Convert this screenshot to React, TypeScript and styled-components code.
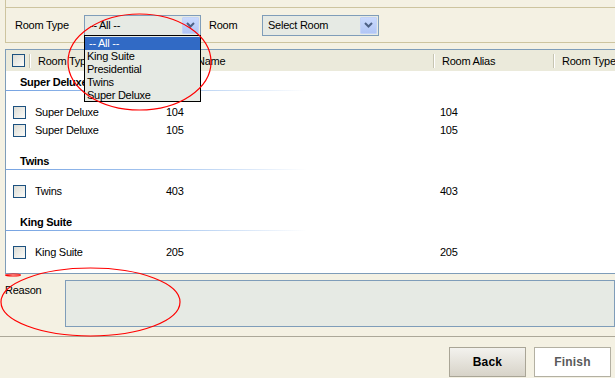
import * as React from 'react'
import styled, { createGlobalStyle } from 'styled-components'

const GlobalStyle = createGlobalStyle`
  html, body {
    margin: 0;
    padding: 0;
    background: #f4f1e3;
  }
  body {
    font-family: 'Liberation Sans', Arial, sans-serif;
    font-size: 11px;
    letter-spacing: -0.25px;
    color: #000;
  }
`

type Room = { type: string; name: string; alias: string }

const groups: { title: string; rooms: Room[] }[] = [
  {
    title: 'Super Deluxe',
    rooms: [
      { type: 'Super Deluxe', name: '104', alias: '104' },
      { type: 'Super Deluxe', name: '105', alias: '105' },
    ],
  },
  { title: 'Twins', rooms: [{ type: 'Twins', name: '403', alias: '403' }] },
  { title: 'King Suite', rooms: [{ type: 'King Suite', name: '205', alias: '205' }] },
]

const roomTypes = ['-- All --', 'King Suite', 'Presidential', 'Twins', 'Super Deluxe']

function Chevron() {
  return (
    <svg width='9' height='6' viewBox='0 0 9 6'>
      <path d='M1 1 L4.5 4.5 L8 1' fill='none' stroke='#4d6185' strokeWidth='2' />
    </svg>
  )
}

export default function App() {
  return (
    <Page>
      <GlobalStyle />
      <TopBox />
      <FilterBar>
        <FieldLabel $width={69}>Room Type</FieldLabel>
        <FakeSelect>
          <span>-- All --</span>
          <ArrowButton>
            <Chevron />
          </ArrowButton>
        </FakeSelect>
        <FieldLabel $width={61} $indent={8}>
          Room
        </FieldLabel>
        <FakeSelect>
          <span>Select Room</span>
          <ArrowButton>
            <Chevron />
          </ArrowButton>
        </FakeSelect>
      </FilterBar>

      <GridFrame>
        <HeaderRow>
          <HeaderCell>
            <Checkbox $offset={6} />
          </HeaderCell>
          <HeaderCell $sep>Room Type</HeaderCell>
          <HeaderCell $sep>Name</HeaderCell>
          <HeaderCell $sep>Room Alias</HeaderCell>
          <HeaderCell $sep>Room Type</HeaderCell>
        </HeaderRow>
        <GridBody>
          {groups.map(g => (
            <Group key={g.title}>
              <GroupTitle>{g.title}</GroupTitle>
              <RowList>
                {g.rooms.map(r => (
                  <DataRow key={r.name}>
                    <Checkbox $offset={7} />
                    <span>{r.type}</span>
                    <span>{r.name}</span>
                    <span>{r.alias}</span>
                  </DataRow>
                ))}
              </RowList>
            </Group>
          ))}
        </GridBody>
      </GridFrame>

      <ReasonRow>
        <ReasonLabel>Reason</ReasonLabel>
        <ReasonBox readOnly value='' />
      </ReasonRow>
      <Divider />
      <ButtonRow>
        <Button>Back</Button>
        <Button $plain>Finish</Button>
      </ButtonRow>

      <DropList>
        {roomTypes.map((t, i) => (
          <DropItem key={t} $selected={i === 0}>
            {t}
          </DropItem>
        ))}
      </DropList>

      <Marks width='615' height='378' viewBox='0 0 615 378'>
        <ellipse cx='139.5' cy='62' rx='71.5' ry='48' />
        <ellipse cx='90.5' cy='302' rx='89.5' ry='34' />
        <ellipse cx='13' cy='275' rx='7.5' ry='1' />
      </Marks>
    </Page>
  )
}

const Page = styled.div`
  position: relative;
  width: 615px;
  height: 378px;
  overflow: hidden;
  background: #f4f1e3;
`
const TopBox = styled.div`
  margin-left: 5px;
  height: 7px;
  border-left: 1px solid #cdc49f;
  border-bottom: 1px solid #cdc49f;
`
const FilterBar = styled.div`
  margin-left: 5px;
  height: 34px;
  padding-left: 9px;
  display: flex;
  align-items: center;
  border-left: 1px solid #cdc49f;
  border-bottom: 1px solid #cdc49f;
`
const FieldLabel = styled.span<{ $width: number; $indent?: number }>`
  box-sizing: border-box;
  width: ${p => p.$width}px;
  padding-left: ${p => p.$indent ?? 0}px;
`
const FakeSelect = styled.div`
  box-sizing: border-box;
  width: 117px;
  height: 21px;
  padding: 0 1px 0 5px;
  display: flex;
  align-items: center;
  justify-content: space-between;
  border: 1px solid #7f9db9;
  background: #e6eae4;
`
const ArrowButton = styled.span`
  box-sizing: border-box;
  width: 17px;
  height: 17px;
  display: flex;
  align-items: center;
  justify-content: center;
  border: 1px solid #c3d3f7;
  border-radius: 1px;
  background: linear-gradient(to bottom, #c9d9fd, #b2c6f5);
`
const GridFrame = styled.div`
  box-sizing: border-box;
  margin: 6px 0 0 5px;
  width: 680px;
  height: 225px;
  display: flex;
  flex-direction: column;
  border: 1px solid #7f9db9;
  background: #fff;
`
const HeaderRow = styled.div`
  height: 21px;
  flex: none;
  display: grid;
  grid-template-columns: 23px 159px 245px 120px 1fr;
  align-items: center;
  background: #ebeadb;
`
const HeaderCell = styled.div<{ $sep?: boolean }>`
  height: 14px;
  line-height: 14px;
  padding-left: ${p => (p.$sep ? 8 : 0)}px;
  display: flex;
  align-items: center;
  border-left: ${p => (p.$sep ? '1px solid #c7c5b2' : 'none')};
  box-shadow: ${p => (p.$sep ? 'inset 1px 0 0 #fff' : 'none')};
`
const Checkbox = styled.span<{ $offset: number }>`
  box-sizing: border-box;
  display: block;
  width: 13px;
  height: 13px;
  margin-left: ${p => p.$offset}px;
  border: 1px solid #1c5180;
  background: linear-gradient(135deg, #dcdcd5, #fbfbf8);
`
const GridBody = styled.div`
  flex: 1;
  padding-top: 3px;
`
const Group = styled.div`
  & + & {
    margin-top: 14px;
  }
`
const GroupTitle = styled.div`
  box-sizing: border-box;
  width: 300px;
  height: 17px;
  padding: 2px 0 0 14px;
  line-height: 13px;
  font-weight: bold;
  border-bottom: 1px solid;
  border-image: linear-gradient(to right, #76a3e2 0%, #a9c8f0 55%, #ffffff 100%) 1;
`
const RowList = styled.div`
  margin-top: 12px;
`
const DataRow = styled.div`
  height: 18px;
  display: grid;
  grid-template-columns: 29px 131px 274px 1fr;
  align-items: center;
`
const ReasonRow = styled.div`
  margin-top: 6px;
  display: flex;
`
const ReasonLabel = styled.div`
  box-sizing: border-box;
  width: 66px;
  padding: 4px 0 0 5px;
  line-height: 13px;
`
const ReasonBox = styled.textarea`
  box-sizing: border-box;
  width: 560px;
  height: 47px;
  margin: 0;
  border: 1px solid #7f9db9;
  background: #e6eae4;
  resize: none;
  outline: none;
`
const Divider = styled.div`
  margin-top: 9px;
  border-top: 1px solid #aca899;
`
const ButtonRow = styled.div`
  margin-top: 10px;
  padding-right: 4px;
  display: flex;
  justify-content: flex-end;
  gap: 8px;
`
const Button = styled.button<{ $plain?: boolean }>`
  box-sizing: border-box;
  width: 77px;
  height: 30px;
  padding: 0;
  font-family: 'Liberation Sans', Arial, sans-serif;
  font-size: 12px;
  font-weight: bold;
  letter-spacing: 0.2px;
  color: ${p => (p.$plain ? '#5a5a5a' : '#000')};
  border: 1px solid ${p => (p.$plain ? '#b3b0a2' : '#a9a596')};
  background: ${p => (p.$plain ? '#fff' : 'linear-gradient(to bottom, #f3f2ee, #d7d3c8)')};
`
const DropList = styled.div`
  position: absolute;
  left: 84px;
  top: 35px;
  box-sizing: border-box;
  width: 117px;
  height: 67px;
  padding: 1px 0;
  border: 1px solid #000;
  background: #e6eae4;
`
const DropItem = styled.div<{ $selected?: boolean }>`
  height: 13px;
  line-height: 13px;
  padding-left: ${p => (p.$selected ? 4 : 2)}px;
  color: ${p => (p.$selected ? '#fff' : '#000')};
  background: ${p => (p.$selected ? '#316ac5' : 'transparent')};
`
const Marks = styled.svg`
  position: absolute;
  left: 0;
  top: 0;
  pointer-events: none;
  fill: none;
  stroke: #ff0000;
  stroke-width: 1.2;
`
